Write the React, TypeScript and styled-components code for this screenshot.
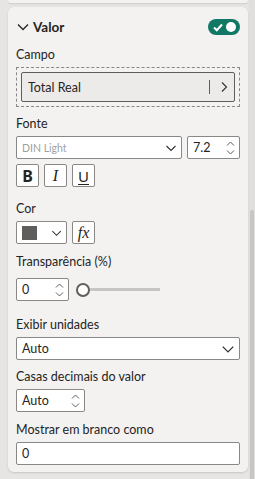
import React from "react";
import styled, { createGlobalStyle } from "styled-components";

const Global = createGlobalStyle`
  html, body { margin: 0; padding: 0; }
  body {
    background: #e6e5e4;
    font-family: "Segoe UI", "Lato", "Noto Sans", sans-serif;
    color: #252423;
    width: 255px;
    height: 479px;
    overflow: hidden;
  }
  * { box-sizing: border-box; }
`;

const Page = styled.div`
  display: flex;
  width: 255px;
  height: 479px;
`;

const Main = styled.div`
  width: 249px;
  padding: 0 1px 0 8px;
  display: flex;
  flex-direction: column;
  gap: 4px;
`;

const PrevCard = styled.div`
  height: 3px;
  background: #f3f2f1;
  border-radius: 0 0 6px 6px;
  box-shadow: 0 1px 2px rgba(0, 0, 0, 0.1);
`;

const Card = styled.div`
  background: #f3f2f1;
  border-radius: 6px;
  box-shadow: 0 1px 2px rgba(0, 0, 0, 0.14);
  padding: 0 8px 7px 8px;
  display: flex;
  flex-direction: column;
`;

const Scrollbar = styled.div`
  width: 6px;
  background: #e1dfdd;
  display: flex;
  flex-direction: column;
  padding: 210px 1px 0 1px;
`;

const Thumb = styled.div`
  flex: 1;
  background: #c8c6c4;
  border-radius: 3px 3px 0 0;
`;

const Header = styled.div`
  height: 40px;
  display: flex;
  align-items: center;
  justify-content: space-between;
  padding-left: 1px;
`;

const HeaderTitle = styled.div`
  display: flex;
  align-items: center;
  gap: 4px;
  font-size: 13.5px;
  font-weight: 700;
`;

const Toggle = styled.div`
  width: 32px;
  height: 16px;
  border-radius: 8px;
  background: #117865;
  display: flex;
  align-items: center;
  justify-content: space-between;
  padding: 0 4px 0 5px;
`;

const Knob = styled.div`
  width: 10px;
  height: 10px;
  border-radius: 50%;
  background: #ffffff;
`;

const Label = styled.div<{ $top: number }>`
  font-size: 12.5px;
  line-height: 16px;
  margin-top: ${(p) => p.$top}px;
  margin-bottom: 4px;
  color: #252423;
`;

const DashedZone = styled.div`
  height: 40px;
  border: 1px dashed #8a8886;
  padding: 4px;
  display: flex;
`;

const Well = styled.div`
  flex: 1;
  background: #edebe9;
  border: 1px solid #605e5c;
  border-radius: 2px;
  display: flex;
  align-items: center;
  padding: 0 6px 0 6px;
  font-size: 12.5px;
`;

const WellText = styled.span`
  flex: 1;
`;

const Sep = styled.div`
  width: 1px;
  height: 14px;
  background: #605e5c;
  margin-right: 10px;
`;

const Row = styled.div<{ $top?: number; $gap?: number }>`
  display: flex;
  gap: ${(p) => p.$gap ?? 5}px;
  align-items: center;
  margin-top: ${(p) => p.$top ?? 0}px;
`;

const Box = styled.div<{ $w?: number; $grow?: boolean }>`
  height: 23px;
  flex: none;
  ${(p) => (p.$w ? `width: ${p.$w}px;` : "")}
  ${(p) => (p.$grow ? "flex: 1 1 0;" : "")}
  background: #ffffff;
  border: 1px solid #8a8886;
  border-radius: 2px;
  display: flex;
  align-items: center;
  padding: 0 4px 0 5px;
  font-size: 12.5px;
  color: #252423;
`;

const BoxText = styled.span<{ $muted?: boolean; $small?: boolean }>`
  flex: 1;
  white-space: nowrap;
  color: ${(p) => (p.$muted ? "#a19f9d" : "#252423")};
  font-size: ${(p) => (p.$small ? "10.5px" : "12.5px")};
`;

const IconBtn = styled.div`
  width: 23px;
  height: 23px;
  background: #ffffff;
  border: 1px solid #8a8886;
  border-radius: 2px;
  display: flex;
  align-items: center;
  justify-content: center;
  color: #252423;
`;

const BoldGlyph = styled.span`
  font-family: "Noto Sans", sans-serif;
  font-weight: 700;
  font-size: 16px;
`;

const ItalicGlyph = styled.span`
  font-family: "Liberation Serif", serif;
  font-style: italic;
  font-size: 16px;
`;

const UnderGlyph = styled.span`
  font-family: "Noto Sans", sans-serif;
  font-size: 15px;
  text-decoration: underline;
  text-underline-offset: 2px;
`;

const FxGlyph = styled.span`
  font-family: "Liberation Serif", serif;
  font-style: italic;
  font-size: 16px;
`;

const Swatch = styled.div`
  width: 16px;
  height: 14px;
  background: #605e5c;
  margin-right: 14px;
`;

const SliderWrap = styled.div`
  display: flex;
  align-items: center;
  margin-left: 1px;
`;

const SliderThumb = styled.div`
  width: 14px;
  height: 14px;
  border: 2px solid #605e5c;
  border-radius: 50%;
  background: #ffffff;
`;

const SliderTrack = styled.div`
  width: 70px;
  height: 3px;
  background: #c8c6c4;
`;

const ChevronDown = ({ size = 12 }: { size?: number }) => (
  <svg width={size} height={size} viewBox="0 0 12 12" fill="none">
    <path d="M1.5 4 L6 8.5 L10.5 4" stroke="#323130" strokeWidth="1.1" />
  </svg>
);

const ChevronRight = () => (
  <svg width="8" height="12" viewBox="0 0 8 12" fill="none">
    <path d="M2 1.5 L6.5 6 L2 10.5" stroke="#323130" strokeWidth="1.1" />
  </svg>
);

const Spin = () => (
  <svg width="9" height="18" viewBox="0 0 9 18" fill="none">
    <path d="M1 6.5 L4.5 3 L8 6.5" stroke="#605e5c" strokeWidth="1" />
    <path d="M1 11.5 L4.5 15 L8 11.5" stroke="#605e5c" strokeWidth="1" />
  </svg>
);

const HeaderChevron = () => (
  <svg width="12" height="12" viewBox="0 0 12 12" fill="none">
    <path d="M1 3.5 L6 8.5 L11 3.5" stroke="#252423" strokeWidth="1.3" />
  </svg>
);

const Check = () => (
  <svg width="10" height="9" viewBox="0 0 10 9" fill="none">
    <path d="M1 4.5 L3.8 7.2 L9 1.5" stroke="#ffffff" strokeWidth="2" />
  </svg>
);

export default function App() {
  return (
    <>
      <Global />
      <Page>
        <Main>
          <PrevCard />
          <Card>
            <Header>
              <HeaderTitle>
                <HeaderChevron />
                <span>Valor</span>
              </HeaderTitle>
              <Toggle>
                <Check />
                <Knob />
              </Toggle>
            </Header>

            <Label $top={0}>Campo</Label>
            <DashedZone>
              <Well>
                <WellText>Total Real</WellText>
                <Sep />
                <ChevronRight />
              </Well>
            </DashedZone>

            <Label $top={9}>Fonte</Label>
            <Row>
              <Box $grow>
                <BoxText $muted $small>DIN Light</BoxText>
                <ChevronDown />
              </Box>
              <Box $w={53}>
                <BoxText>7.2</BoxText>
                <Spin />
              </Box>
            </Row>
            <Row $top={5}>
              <IconBtn><BoldGlyph>B</BoldGlyph></IconBtn>
              <IconBtn><ItalicGlyph>I</ItalicGlyph></IconBtn>
              <IconBtn><UnderGlyph>U</UnderGlyph></IconBtn>
            </Row>

            <Label $top={14}>Cor</Label>
            <Row>
              <Box $w={51}>
                <Swatch />
                <ChevronDown />
              </Box>
              <IconBtn><FxGlyph>fx</FxGlyph></IconBtn>
            </Row>

            <Label $top={10}>Transparência (%)</Label>
            <Row $top={4} $gap={6}>
              <Box $w={53}>
                <BoxText>0</BoxText>
                <Spin />
              </Box>
              <SliderWrap>
                <SliderThumb />
                <SliderTrack />
              </SliderWrap>
            </Row>

            <Label $top={16}>Exibir unidades</Label>
            <Box>
              <BoxText>Auto</BoxText>
              <ChevronDown size={14} />
            </Box>

            <Label $top={9}>Casas decimais do valor</Label>
            <Box $w={69}>
              <BoxText>Auto</BoxText>
              <Spin />
            </Box>

            <Label $top={10}>Mostrar em branco como</Label>
            <Box>
              <BoxText>0</BoxText>
            </Box>
          </Card>
        </Main>
        <Scrollbar>
          <Thumb />
        </Scrollbar>
      </Page>
    </>
  );
}
